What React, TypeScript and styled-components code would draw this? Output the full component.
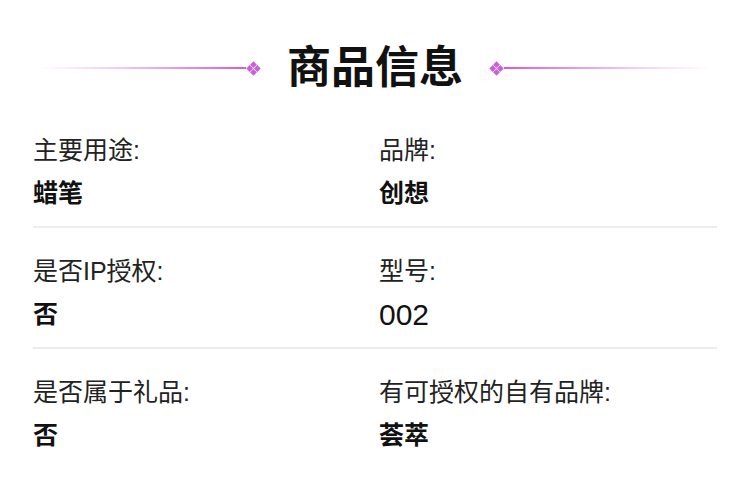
import React from 'react';
import styled, { createGlobalStyle } from 'styled-components';

interface Spec {
    label: string,
    value: string,
    plain?: boolean,
}

const rows: Array<[Spec, Spec]> = [
    [{ label: '主要用途:', value: '蜡笔' }, { label: '品牌:', value: '创想' }],
    [{ label: '是否IP授权:', value: '否' }, { label: '型号:', value: '002', plain: true }],
    [{ label: '是否属于礼品:', value: '否' }, { label: '有可授权的自有品牌:', value: '荟萃' }],
];

// four little diamonds packed into one bigger diamond
const Ornament = () => (
    <Diamond width="15" height="15" viewBox="0 0 15 15">
        <path d="M7.5 0.3L10.9 3.7L7.5 7.1L4.1 3.7Z" />
        <path d="M3.7 4.1L7.1 7.5L3.7 10.9L0.3 7.5Z" />
        <path d="M11.3 4.1L14.7 7.5L11.3 10.9L7.9 7.5Z" />
        <path d="M7.5 7.9L10.9 11.3L7.5 14.7L4.1 11.3Z" />
    </Diamond>
);

export default function App() {
    return (
        <Page>
            <GlobalStyle />
            <Header>
                <Line side="left" />
                <Ornament />
                <Title>商品信息</Title>
                <Ornament />
                <Line side="right" />
            </Header>
            <List>
                {rows.map((pair, i) => (
                    <Row key={i} last={i === rows.length - 1}>
                        {pair.map((spec) => (
                            <Cell key={spec.label}>
                                <Label>{spec.label}</Label>
                                <Value plain={spec.plain}>{spec.value}</Value>
                            </Cell>
                        ))}
                    </Row>
                ))}
            </List>
        </Page>
    );
}

const GlobalStyle = createGlobalStyle`
    body {
        margin: 0;
        background: #ffffff;
        font-family: "Liberation Sans", "Noto Sans CJK SC", sans-serif;
    }
`;

const Page = styled.div`
    width: 750px;
    height: 492px;
    padding: 38px 33px 0;
    box-sizing: border-box;
    background: #ffffff;
`;

const Header = styled.div`
    height: 60px;
    display: flex;
    align-items: center;
    justify-content: center;
    margin-bottom: 9px;
`;

const Line = styled.div<{ side: 'left' | 'right' }>`
    width: 206px;
    height: 2px;
    background: linear-gradient(
        ${(p) => (p.side === 'left' ? 'to right' : 'to left')},
        rgba(214, 96, 222, 0) 0%,
        rgba(214, 96, 222, 0.35) 40%,
        #d35cdc 100%
    );
`;

const Diamond = styled.svg`
    flex: none;
    fill: #c95fd9;
`;

const Title = styled.h1`
    margin: 0 26px;
    font-size: 44px;
    font-weight: 700;
    color: #111111;
    line-height: 60px;
`;

const List = styled.div`
    display: flex;
    flex-direction: column;
`;

const Row = styled.div<{ last?: boolean }>`
    display: grid;
    grid-template-columns: 346px 1fr;
    padding: 26px 0 15px;
    border-bottom: 2px solid ${(p) => (p.last ? 'transparent' : '#ececec')};
`;

const Cell = styled.div`
    display: flex;
    flex-direction: column;
    gap: 8px;
`;

const Label = styled.div`
    font-size: 25px;
    line-height: 35px;
    color: #222222;
`;

const Value = styled.div<{ plain?: boolean }>`
    font-size: ${(p) => (p.plain ? '30px' : '25px')};
    line-height: 35px;
    font-weight: ${(p) => (p.plain ? 400 : 700)};
    color: #111111;
`;
